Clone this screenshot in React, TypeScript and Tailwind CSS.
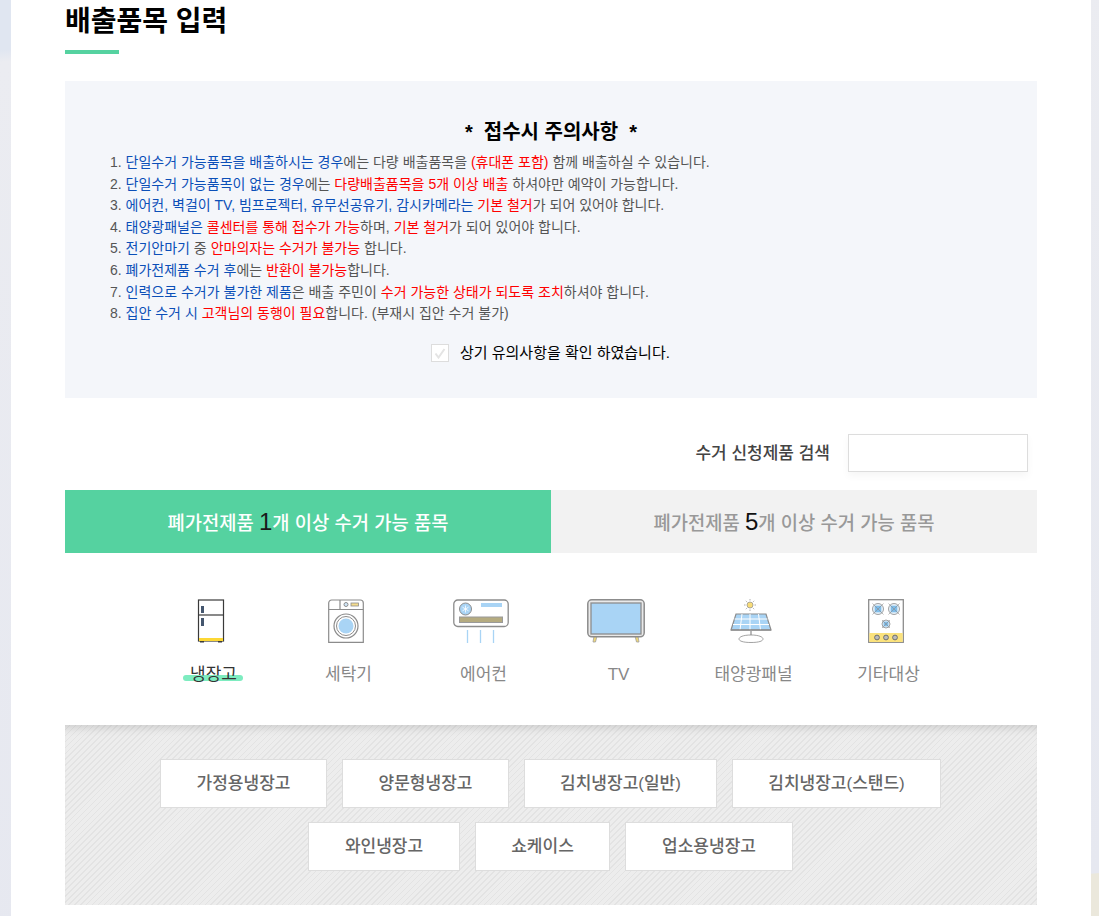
const FONT = "font-['Liberation_Sans','Noto_Sans_CJK_KR',sans-serif]";

const notices: { text: string; color?: "r" | "b" }[][] = [
  [
    { text: "단일수거 가능품목을 배출하시는 경우", color: "b" },
    { text: "에는 다량 배출품목을 " },
    { text: "(휴대폰 포함)", color: "r" },
    { text: " 함께 배출하실 수 있습니다." },
  ],
  [
    { text: "단일수거 가능품목이 없는 경우", color: "b" },
    { text: "에는 " },
    { text: "다량배출품목을 5개 이상 배출", color: "r" },
    { text: " 하셔야만 예약이 가능합니다." },
  ],
  [
    { text: "에어컨, 벽걸이 TV, 빔프로젝터, 유무선공유기, 감시카메라는", color: "b" },
    { text: " " },
    { text: "기본 철거", color: "r" },
    { text: "가 되어 있어야 합니다." },
  ],
  [
    { text: "태양광패널은", color: "b" },
    { text: " " },
    { text: "콜센터를 통해 접수가 가능", color: "r" },
    { text: "하며, " },
    { text: "기본 철거", color: "r" },
    { text: "가 되어 있어야 합니다." },
  ],
  [
    { text: "전기안마기", color: "b" },
    { text: " 중 " },
    { text: "안마의자는 수거가 불가능", color: "r" },
    { text: " 합니다." },
  ],
  [
    { text: "폐가전제품 수거 후", color: "b" },
    { text: "에는 " },
    { text: "반환이 불가능", color: "r" },
    { text: "합니다." },
  ],
  [
    { text: "인력으로 수거가 불가한 제품", color: "b" },
    { text: "은 배출 주민이 " },
    { text: "수거 가능한 상태가 되도록 조치", color: "r" },
    { text: "하셔야 합니다." },
  ],
  [
    { text: "집안 수거 시", color: "b" },
    { text: " " },
    { text: "고객님의 동행이 필요", color: "r" },
    { text: "합니다. (부재시 집안 수거 불가)" },
  ],
];

function FridgeIcon() {
  return (
    <svg width="28" height="44" viewBox="0 0 28 44" fill="none">
      <rect x="1.5" y="1" width="25" height="41" fill="#fff" stroke="#3a3a3a" strokeWidth="1.2" />
      <path d="M1.5 16h25" stroke="#3a3a3a" strokeWidth="1.2" />
      <rect x="4" y="7" width="3" height="7" fill="#44566e" />
      <rect x="4" y="19" width="3" height="8" fill="#44566e" />
      <rect x="2" y="39" width="24" height="3" fill="#fdd835" />
      <rect x="3" y="42" width="4" height="1.5" fill="#3a3a3a" />
      <rect x="21" y="42" width="4" height="1.5" fill="#3a3a3a" />
    </svg>
  );
}

function WasherIcon() {
  return (
    <svg width="36" height="44" viewBox="0 0 36 44" fill="none">
      <path d="M.7 4a3 3 0 0 1 3-3h28.600a3 3 0 0 1 3 3v39.300H.700z" fill="#fff" stroke="#8c8c8c" strokeWidth="1.2" />
      <path d="M.7 10.500h34.600M12 1v9.500" stroke="#8c8c8c" strokeWidth="1.2" />
      <circle cx="18" cy="27" r="12" fill="#fff" stroke="#8c8c8c" strokeWidth="1.2" />
      <circle cx="18" cy="27" r="9.500" fill="#fff" stroke="#8c8c8c" strokeWidth="1" />
      <circle cx="18" cy="27" r="7.500" fill="#a9d4f5" />
      <circle cx="18" cy="5.500" r="2" fill="#cfe6f8" stroke="#8c8c8c" />
      <rect x="23" y="4" width="7.500" height="3" fill="#f5dc8c" stroke="#8c8c8c" strokeWidth=".8" />
    </svg>
  );
}

function AirconIcon() {
  return (
    <svg width="56" height="44" viewBox="0 0 56 44" fill="none">
      <rect x=".8" y="1" width="54.400" height="26.500" rx="4" fill="#fff" stroke="#8c8c8c" strokeWidth="1.300" />
      <circle cx="12.500" cy="10" r="6" fill="#a9d4f5" stroke="#8c8c8c" />
      <path d="M12.500 6.500v7M9.500 8.200l6 3.600M15.500 8.200l-6 3.600" stroke="#fff" strokeWidth=".8" />
      <rect x="28" y="4" width="21" height="4" fill="#a9d4f5" />
      <rect x="6.500" y="18" width="43" height="5.500" fill="#b5ab80" stroke="#9a9a9a" />
      <path d="M14.500 31v13M27.500 31v13M40.500 31v13" stroke="#a9d4f5" strokeWidth="1.300" />
    </svg>
  );
}

function TvIcon() {
  return (
    <svg width="58" height="44" viewBox="0 0 58 44" fill="none">
      <path d="M7 37l-1 6h2.500l1.500-6zM51 37l1 6h-2.500L48 37z" fill="#f0d878" stroke="#a0a0a0" strokeWidth=".8" />
      <rect x=".8" y=".8" width="56.400" height="37" rx="4" fill="#e9e9e9" stroke="#8c8c8c" strokeWidth="1.500" />
      <rect x="4" y="4" width="50" height="31" fill="#a9d4f5" stroke="#8c8c8c" strokeWidth="1.300" />
    </svg>
  );
}

function SolarIcon() {
  return (
    <svg width="42" height="44" viewBox="0 0 42 44" fill="none">
      <circle cx="20" cy="6" r="3" fill="#f8dc78" stroke="#8c8c8c" strokeWidth=".7" />
      <path d="M20 0v1.500M20 10.500V12M14 6h1.500M24.500 6H26M15.800 1.800l1 1M23.200 9.200l1 1M24.200 1.800l-1 1M16.800 9.200l-1 1" stroke="#8c8c8c" strokeWidth=".7" />
      <path d="M6 15h30l5 16H1z" fill="#a9d4f5" stroke="#8c8c8c" strokeWidth="1.200" />
      <path d="M4.500 20h33M3 25.500h36M12 15l-2 16M20 15v16M28.500 15l2 16" stroke="#fff" strokeWidth="1" />
      <path d="M1 31h40" stroke="#8c8c8c" strokeWidth="1.600" />
      <path d="M21 32v4" stroke="#8c8c8c" strokeWidth="1.200" />
      <path d="M21 36c-8 0-12 2-12 4s4 3.500 12 3.500 12-1.500 12-3.500-4-4-12-4z" fill="#fff" stroke="#8c8c8c" strokeWidth=".8" />
    </svg>
  );
}

function StoveIcon() {
  const burner = (cx: number, cy: number, r: number) => (
    <g key={cx + "-" + cy}>
      <circle cx={cx} cy={cy} r={r} fill="#e8f2fa" stroke="#8c8c8c" strokeWidth=".8" />
      <rect x={cx - r * 0.6} y={cy - r * 0.6} width={r * 1.2} height={r * 1.2} fill="#7fbdea" />
      <path d={`M${cx - r} ${cy - r}l${r * 2} ${r * 2}M${cx + r} ${cy - r}l${-r * 2} ${r * 2}`} stroke="#8c8c8c" strokeWidth=".6" />
    </g>
  );
  return (
    <svg width="36" height="44" viewBox="0 0 36 44" fill="none">
      <rect x=".7" y=".7" width="34.600" height="42.600" fill="#fff" stroke="#8c8c8c" strokeWidth="1.300" />
      <rect x="1.300" y="34" width="33.400" height="9" fill="#fbe27c" />
      {burner(10, 10, 5.500)}
      {burner(26, 10, 5.500)}
      {burner(18, 25, 4)}
      {[9, 18, 27].map((x) => (
        <circle key={x} cx={x} cy="38.500" r="2.400" fill="#bbb" stroke="#666" strokeWidth=".9" />
      ))}
    </svg>
  );
}

const categories = [
  { label: "냉장고", icon: <FridgeIcon />, active: true },
  { label: "세탁기", icon: <WasherIcon /> },
  { label: "에어컨", icon: <AirconIcon /> },
  { label: "TV", icon: <TvIcon /> },
  { label: "태양광패널", icon: <SolarIcon /> },
  { label: "기타대상", icon: <StoveIcon /> },
];

const rowOne = [
  { label: "가정용냉장고", w: "w-[167px]" },
  { label: "양문형냉장고", w: "w-[167px]" },
  { label: "김치냉장고(일반)", w: "w-[193px]" },
  { label: "김치냉장고(스탠드)", w: "w-[209px]" },
];

const rowTwo = [
  { label: "와인냉장고", w: "w-[152px]" },
  { label: "쇼케이스", w: "w-[135px]" },
  { label: "업소용냉장고", w: "w-[168px]" },
];

function ProductButton({ label, w }: { label: string; w: string }) {
  return (
    <button className={`${w} h-[49px] pt-[1px] bg-white border border-[#dddddd] text-[17px] font-medium text-[#666666]`}>
      {label}
    </button>
  );
}

export default function App() {
  return (
    <div className={`${FONT} flex h-[916px] overflow-hidden bg-[linear-gradient(175deg,#e0e6f1_0px,#e0e6f1_50px,#ebecf1_62px,#e6e8f0_965px,#ebe8dc_966px)]`}>
      <div className="w-[1080px] ml-[11px] bg-white px-[54px] h-full">
        <h1 className="text-[28px] leading-[44px] font-bold text-black">배출품목 입력</h1>
        <div className="mt-[6px] w-[54px] h-1 bg-[#55d2a0]" />

        <div className="mt-[27px] h-[317px] bg-[#f4f6fa] pt-[39px] pl-[45px]">
          <h2 className="text-center text-[20px] leading-[24px] font-bold text-black pr-[45px]">
            * &nbsp;접수시 주의사항 &nbsp;*
          </h2>
          <ol className="mt-[8px] text-[14px] leading-[21.6px] text-[#555555]">
            {notices.map((line, i) => (
              <li key={i} className="whitespace-nowrap">
                {i + 1}.{" "}
                {line.map((part, j) => (
                  <span
                    key={j}
                    className={
                      part.color === "r"
                        ? "text-[#ff0000]"
                        : part.color === "b"
                          ? "text-[#0b4fb8]"
                          : ""
                    }
                  >
                    {part.text}
                  </span>
                ))}
              </li>
            ))}
          </ol>
          <div className="mt-[17px] flex items-center pl-[321px]">
            <span className="w-[18px] h-[18px] border border-[#dddddd] bg-white flex items-center justify-center">
              <svg width="12" height="11" viewBox="0 0 12 11" fill="none">
                <path d="M1.500 5.500l3 4 6-8.500" stroke="#e4e4e4" strokeWidth="2" />
              </svg>
            </span>
            <span className="ml-[11px] text-[15px] text-black">상기 유의사항을 확인 하였습니다.</span>
          </div>
        </div>

        <div className="mt-9 h-[38px] flex items-center justify-end pr-[9px]">
          <span className="pt-[2px] text-[17px] font-medium text-[#444444] mr-[18px]">수거 신청제품 검색</span>
          <input className="w-[180px] h-[38px] bg-white border border-[#dddddd] shadow-[0_4px_8px_rgba(0,0,0,0.04)]" />
        </div>

        <div className="mt-[18px] grid grid-cols-2 h-[63px] text-[18.750px] font-medium">
          <div className="bg-[#55d2a0] text-white flex items-center justify-center pt-[1px]">
            <span>
              폐가전제품 <span className="text-[24px] font-normal text-[#1a1a1a]">1</span>개 이상 수거 가능 품목
            </span>
          </div>
          <div className="bg-[#f2f2f2] text-[#999999] flex items-center justify-center pt-[1px]">
            <span>
              폐가전제품 <span className="text-[24px] font-normal text-[#111111]">5</span>개 이상 수거 가능 품목
            </span>
          </div>
        </div>

        <div className="mt-[46px] mx-[81px] grid grid-cols-6">
          {categories.map((c) => (
            <div key={c.label} className="flex flex-col items-center">
              <div className="h-[44px] flex items-end pr-[5px]">{c.icon}</div>
              <div className="relative mt-[20px] h-[23px]">
                {c.active && (
                  <span className="absolute left-[-7px] right-[-6px] top-[12px] h-[6px] rounded-full bg-[#7eecc0]" />
                )}
                <span className={`relative text-[17px] leading-[24px] ${c.active ? "text-[#333333]" : "text-[#888888]"}`}>
                  {c.label}
                </span>
              </div>
            </div>
          ))}
        </div>

        <div className="mt-[39px] h-[180px] pt-[34px] flex flex-col gap-[14px] bg-[repeating-linear-gradient(135deg,#ededed_0px,#ededed_3px,#e3e3e3_3px,#e3e3e3_4.2px)] shadow-[inset_0_9px_8px_-6px_rgba(0,0,0,0.13)]">
          <div className="flex justify-center gap-[15px] pr-[1px]">
            {rowOne.map((b) => (
              <ProductButton key={b.label} {...b} />
            ))}
          </div>
          <div className="flex justify-center gap-[15px] pr-[1px]">
            {rowTwo.map((b) => (
              <ProductButton key={b.label} {...b} />
            ))}
          </div>
        </div>
      </div>
    </div>
  );
}
